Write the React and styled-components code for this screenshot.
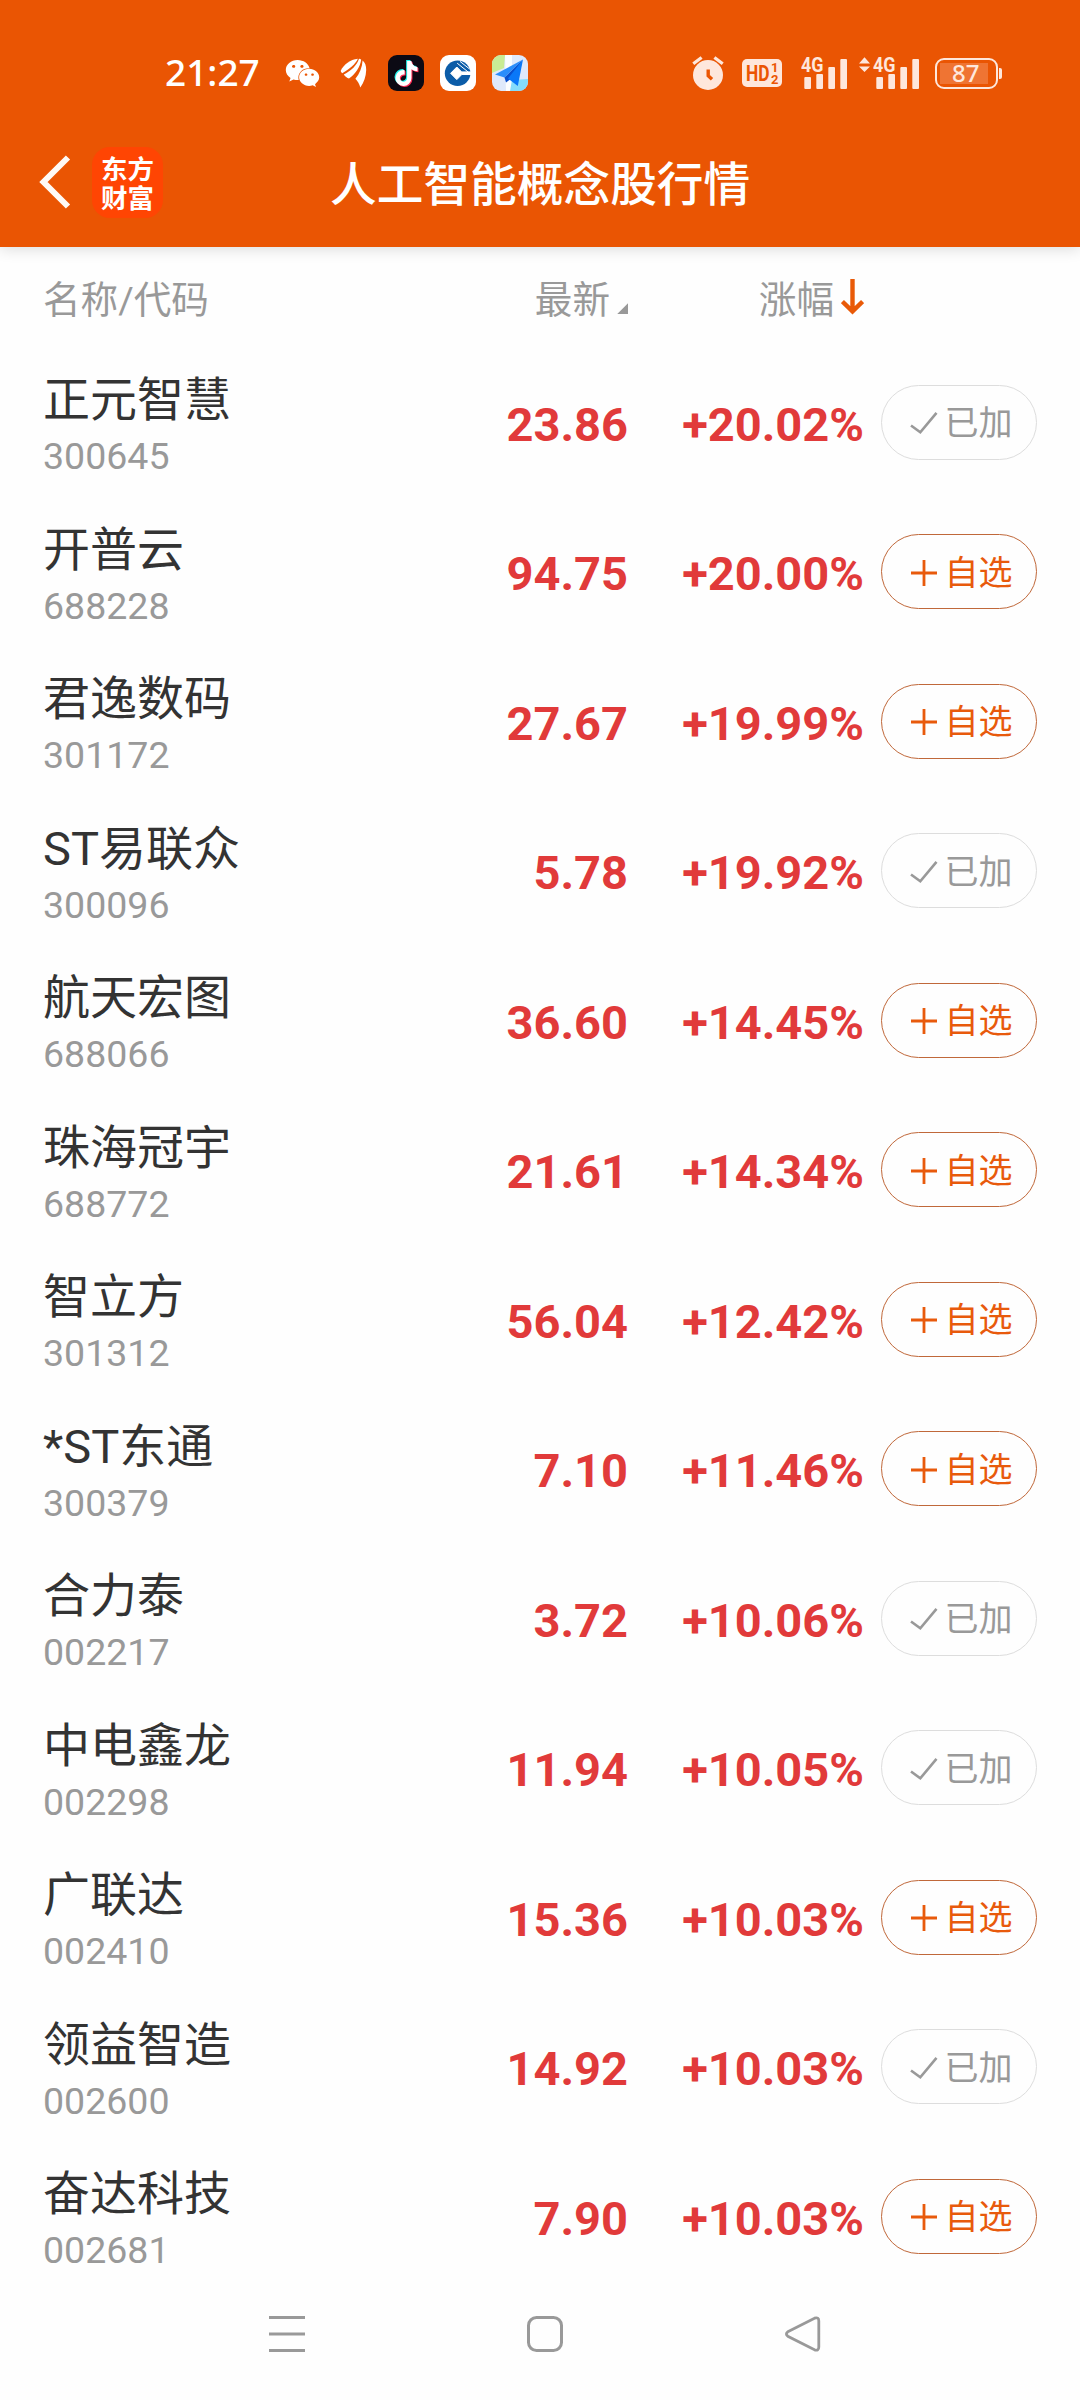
import React from "react";
import styled, { createGlobalStyle, css } from "styled-components";
import { FaTiktok, FaWeixin } from "react-icons/fa";

const stocks = [
  { name: "正元智慧", code: "300645", price: "23.86", change: "+20.02%", added: true },
  { name: "开普云", code: "688228", price: "94.75", change: "+20.00%" },
  { name: "君逸数码", code: "301172", price: "27.67", change: "+19.99%" },
  { name: "ST易联众", code: "300096", price: "5.78", change: "+19.92%", added: true },
  { name: "航天宏图", code: "688066", price: "36.60", change: "+14.45%" },
  { name: "珠海冠宇", code: "688772", price: "21.61", change: "+14.34%" },
  { name: "智立方", code: "301312", price: "56.04", change: "+12.42%" },
  { name: "*ST东通", code: "300379", price: "7.10", change: "+11.46%" },
  { name: "合力泰", code: "002217", price: "3.72", change: "+10.06%", added: true },
  { name: "中电鑫龙", code: "002298", price: "11.94", change: "+10.05%", added: true },
  { name: "广联达", code: "002410", price: "15.36", change: "+10.03%" },
  { name: "领益智造", code: "002600", price: "14.92", change: "+10.03%", added: true },
  { name: "奋达科技", code: "002681", price: "7.90", change: "+10.03%" },
];

const WingIcon = () => (
  <svg width="28" height="30" viewBox="0 0 28 30" fill="#fff">
    <path d="M0.8 12.5C4 6.5 10 1.6 17.9 0.8C15.5 5.8 10 11 2.2 15.2C1.2 14.4 0.7 13.5 0.8 12.5Z" />
    <path d="M19 0.8C20 0.9 20.6 1.2 21.2 1.7C20 9.5 15.5 15.6 9 20.6C7 20 5.2 18.6 3.8 16.6C11.5 12.6 16.8 7.4 19 0.8Z" />
    <path d="M22.6 2.4C25 4.4 26.3 7.5 26.2 12C26 18.5 24 24.5 20.3 29.5C19.4 26.2 17.8 23.4 15.4 20.8C19.6 15.4 22.2 9.4 22.6 2.4Z" />
  </svg>
);

const BankIcon = () => (
  <svg width="36" height="36" viewBox="0 0 36 36">
    <rect width="36" height="36" rx="9" fill="#fff" />
    <circle cx="17.6" cy="18.2" r="12.8" fill="#0b5ca8" />
    <path d="M16.8 12L23 18.3L16.8 24.6L10.6 18.3Z" fill="#fff" stroke="#fff" strokeWidth="1" strokeLinejoin="round" />
    <path d="M22 16.4H32V20H22Z" fill="#fff" />
    <path d="M17.2 8.2L28.4 17.2M20 6.4L29.6 14" stroke="#fff" strokeWidth="1" />
  </svg>
);

const MapIcon = () => (
  <svg width="36" height="36" viewBox="0 0 36 36">
    <defs>
      <clipPath id="mapTile">
        <rect width="36" height="36" rx="9" />
      </clipPath>
    </defs>
    <g clipPath="url(#mapTile)">
      <rect width="36" height="36" fill="#dfe9fb" />
      <path d="M0 0H13L12 13L0 18Z" fill="#c9ec94" />
      <path d="M13 0H20V36H14Z" fill="#fbfdff" />
      <path d="M20 25L36 24V36H18Z" fill="#84dcfb" />
    </g>
    <path d="M31 4.5L3 19.5L12.5 22.5Z" fill="#2a8dfb" />
    <path d="M31 4.5L12.5 22.5L14 27.5L18 24.5Z" fill="#0850cf" />
    <path d="M31 4.5L16 23.5L25.8 31Z" fill="#0a78f8" />
  </svg>
);

const AlarmIcon = () => (
  <svg width="32" height="34" viewBox="0 0 32 34">
    <circle cx="16" cy="19" r="15" fill="#fee7dc" />
    <path d="M1.3 7.8L9.6 1.4M22.4 1.4L30.7 7.8" stroke="#fee7dc" strokeWidth="3.2" />
    <path d="M16.2 13.5V19.8L20 23.3" fill="none" stroke="#eb5503" strokeWidth="3.4" />
  </svg>
);

const HdIcon = () => (
  <svg width="40" height="28" viewBox="0 0 40 28">
    <rect width="40" height="28" rx="5" fill="#fee7dc" />
    <g fill="#eb5503" fontFamily="Roboto, sans-serif" fontWeight="700">
      <text x="4" y="22" fontSize="21.5" textLength="23.5" lengthAdjust="spacingAndGlyphs">HD</text>
      <text x="29" y="13" fontSize="13">1</text>
      <text x="29" y="25" fontSize="13">2</text>
    </g>
  </svg>
);

const SignalIcon = ({ arrows }) => (
  <svg width={arrows ? 60 : 46} height="44" viewBox={arrows ? "-14 -6 60 44" : "0 -6 46 44"} fill="#fee7dc">
    {arrows && <path d="M-14 6.5L-8.5 0.3L-3 6.5ZM-14 9.5L-8.5 15L-3 9.5Z" />}
    <text x="0" y="15" fontFamily="Roboto, sans-serif" fontWeight="700" fontSize="19.5" textLength="22.5" lengthAdjust="spacingAndGlyphs">4G</text>
    <rect x="3.3" y="20" width="6.7" height="12" rx="1" />
    <rect x="15.3" y="17" width="6.7" height="15" rx="1" />
    <rect x="27.3" y="10" width="6.7" height="22" rx="1" />
    <rect x="39.3" y="2" width="6.7" height="30" rx="1" />
  </svg>
);

const BackIcon = () => (
  <svg width="32" height="56" viewBox="0 0 32 56" fill="none" stroke="#fffaf5" strokeWidth="6">
    <path d="M29 3.5L4.5 28L29 52.5" />
  </svg>
);

const ArrowDown = () => (
  <svg width="23" height="36" viewBox="0 0 23 36" fill="none" stroke="#e95a08" strokeWidth="4.4">
    <path d="M11.5 0V33M1.4 22.5L11.5 32.4L21.6 22.5" />
  </svg>
);

const CheckIcon = () => (
  <svg width="28" height="28" viewBox="0 0 28 28" fill="none" stroke="#999" strokeWidth="2.6">
    <path d="M1 16.5L10.3 23.3L26.5 3.8" />
  </svg>
);

const PlusIcon = () => (
  <svg width="28" height="28" viewBox="0 0 28 28" fill="none" stroke="#e85a0c" strokeWidth="2.8">
    <path d="M1 14H27M14 1V27" />
  </svg>
);

export default function App() {
  return (
    <Page>
      <GlobalStyle />
      <Header>
        <StatusBar>
          <Clock>21:27</Clock>
          <Notifications>
            <FaWeixin size={35} color="#fff" />
            <WingIcon />
            <TikTokTile>
              <FaTiktok size={25} />
            </TikTokTile>
            <BankIcon />
            <MapIcon />
          </Notifications>
          <SystemIcons>
            <AlarmIcon />
            <HdIcon />
            <SignalIcon />
            <SignalIcon arrows />
            <Battery>
              <Level>87</Level>
            </Battery>
          </SystemIcons>
        </StatusBar>
        <TitleBar>
          <BackIcon />
          <Logo>东方财富</Logo>
          <Title>人工智能概念股行情</Title>
        </TitleBar>
      </Header>
      <ColumnHeads>
        <Head $align="left">名称/代码</Head>
        <Head>
          最新
          <Corner />
        </Head>
        <Head>
          涨幅
          <ArrowDown />
        </Head>
      </ColumnHeads>
      <List>
        {stocks.map((stock) => (
          <Row key={stock.code}>
            <Stock>
              <Name>{stock.name}</Name>
              <Code>{stock.code}</Code>
            </Stock>
            <Figure>{stock.price}</Figure>
            <Figure>{stock.change}</Figure>
            <FollowButton $added={stock.added}>
              {stock.added ? <CheckIcon /> : <PlusIcon />}
              {stock.added ? "已加" : "自选"}
            </FollowButton>
          </Row>
        ))}
      </List>
      <SystemNav>
        <svg width="36" height="36" viewBox="0 0 36 36" stroke="#999" strokeWidth="3">
          <path d="M0 1.6H36M0 18H36M0 34.4H36" />
        </svg>
        <svg width="36" height="36" viewBox="0 0 36 36" fill="none" stroke="#999" strokeWidth="3">
          <rect x="1.5" y="1.5" width="33" height="33" rx="8" />
        </svg>
        <svg width="36" height="36" viewBox="0 0 36 36" fill="none" stroke="#999" strokeWidth="2.8">
          <path d="M2.8 15.8L29.5 2.2Q33.8 0.8 33.8 5V31Q33.8 35.2 29.5 33.8L2.8 20.2Q0 18 2.8 15.8Z" />
        </svg>
      </SystemNav>
    </Page>
  );
}

const GlobalStyle = createGlobalStyle`
  body {
    margin: 0;
    background: #fff;
  }
  * {
    box-sizing: border-box;
  }
  svg {
    display: block;
    flex-shrink: 0;
  }
`;

const Page = styled.div`
  width: 1080px;
  height: 2400px;
  display: flex;
  flex-direction: column;
  overflow: hidden;
  background: #fefefe;
  font-family: Roboto, "Noto Sans CJK SC", sans-serif;
`;

const Header = styled.header`
  height: 247px;
  flex-shrink: 0;
  background: #ea5503;
  color: #fff;
  box-shadow: 0 2px 14px rgba(0, 0, 0, 0.14);
`;

const StatusBar = styled.div`
  height: 146px;
  padding: 0 78px 0 165px;
  display: flex;
  align-items: center;
`;

const Clock = styled.div`
  width: 111px;
  padding-bottom: 2px;
  font-family: "Noto Sans", sans-serif;
  font-size: 37px;
  font-weight: 500;
  line-height: 40px;
`;

const Notifications = styled.div`
  display: grid;
  grid-template-columns: repeat(5, 52px);
  justify-items: center;
  align-items: center;
`;

const TikTokTile = styled.div`
  width: 36px;
  height: 36px;
  border-radius: 9px;
  background: #0c0a14;
  color: #fff;
  display: flex;
  align-items: center;
  justify-content: center;
  svg {
    filter: drop-shadow(-1px -1px 0 #25f4ee) drop-shadow(1px 1px 0 #fe2c55);
  }
`;

const SystemIcons = styled.div`
  margin-left: auto;
  display: grid;
  grid-template-columns: 50px 59px 58px 76px 67px;
  align-items: center;
`;

const Battery = styled.div`
  width: 63px;
  height: 31px;
  padding: 3px;
  border: 2px solid #fee7dc;
  border-radius: 9px;
  position: relative;
  &::after {
    content: "";
    position: absolute;
    right: -6px;
    top: 8px;
    width: 3px;
    height: 11px;
    border-radius: 0 2px 2px 0;
    background: #fee7dc;
  }
`;

const Level = styled.div`
  width: 48px;
  height: 21px;
  padding-left: 12px;
  background: #ef7433;
  color: #fee7dc;
  font-family: "Noto Sans", sans-serif;
  font-size: 24px;
  font-weight: 500;
  line-height: 19px;
`;

const TitleBar = styled.div`
  height: 72px;
  padding-left: 39px;
  display: flex;
  align-items: center;
`;

const Logo = styled.div`
  width: 71px;
  height: 71px;
  margin-left: 21px;
  padding: 6px 8px 0 9px;
  border-radius: 18px;
  background: #ff4503;
  font-family: "Noto Sans CJK SC", sans-serif;
  font-size: 26.5px;
  font-weight: 700;
  line-height: 29px;
  word-break: break-all;
`;

const Title = styled.h1`
  margin: 0 0 0 167px;
  padding-top: 6px;
  font-size: 46.7px;
  font-weight: 500;
  line-height: 60px;
  white-space: nowrap;
`;

const columns = css`
  display: grid;
  grid-template-columns: 1fr 240px 236px 173px;
  padding: 0 43px;
  align-items: center;
`;

const ColumnHeads = styled.div`
  ${columns}
  height: 100.5px;
  flex-shrink: 0;
`;

const Head = styled.div`
  display: flex;
  justify-content: ${(props) => (props.$align === "left" ? "flex-start" : "flex-end")};
  align-items: center;
  padding-top: 5px;
  color: #999;
  font-size: 37.6px;
  line-height: 48px;
  svg {
    margin-left: 7px;
    margin-top: -5px;
  }
`;

const Corner = styled.i`
  width: 11px;
  height: 11px;
  margin: 18px 0 0 7px;
  background: #999;
  clip-path: polygon(100% 0, 100% 100%, 0 100%);
`;

const List = styled.main`
  flex-shrink: 0;
`;

const Row = styled.div`
  ${columns}
  height: 149.5px;
`;

const Stock = styled.div`
  display: flex;
  flex-direction: column;
  padding-top: 6px;
`;

const Name = styled.div`
  color: #333;
  font-size: 47px;
  line-height: 62px;
  white-space: nowrap;
`;

const Code = styled.div`
  color: #999;
  font-size: 37.5px;
  line-height: 50px;
`;

const Figure = styled.div`
  padding-top: 5px;
  color: #e13a3a;
  font-size: 47px;
  font-weight: 700;
  line-height: 60px;
  text-align: right;
`;

const FollowButton = styled.button`
  width: 156px;
  height: 75px;
  margin: 0;
  padding: 2px 0 0 4px;
  justify-self: end;
  display: flex;
  justify-content: center;
  align-items: center;
  gap: 7px;
  border: 1px solid ${(props) => (props.$added ? "#ddd" : "#c0683a")};
  border-radius: 38px;
  background: transparent;
  color: ${(props) => (props.$added ? "#999" : "#e85a0c")};
  font-family: inherit;
  font-size: 34px;
  line-height: 44px;
`;

const SystemNav = styled.nav`
  margin-top: 25px;
  padding: 0 259px 0 269px;
  display: flex;
  justify-content: space-between;
`;
